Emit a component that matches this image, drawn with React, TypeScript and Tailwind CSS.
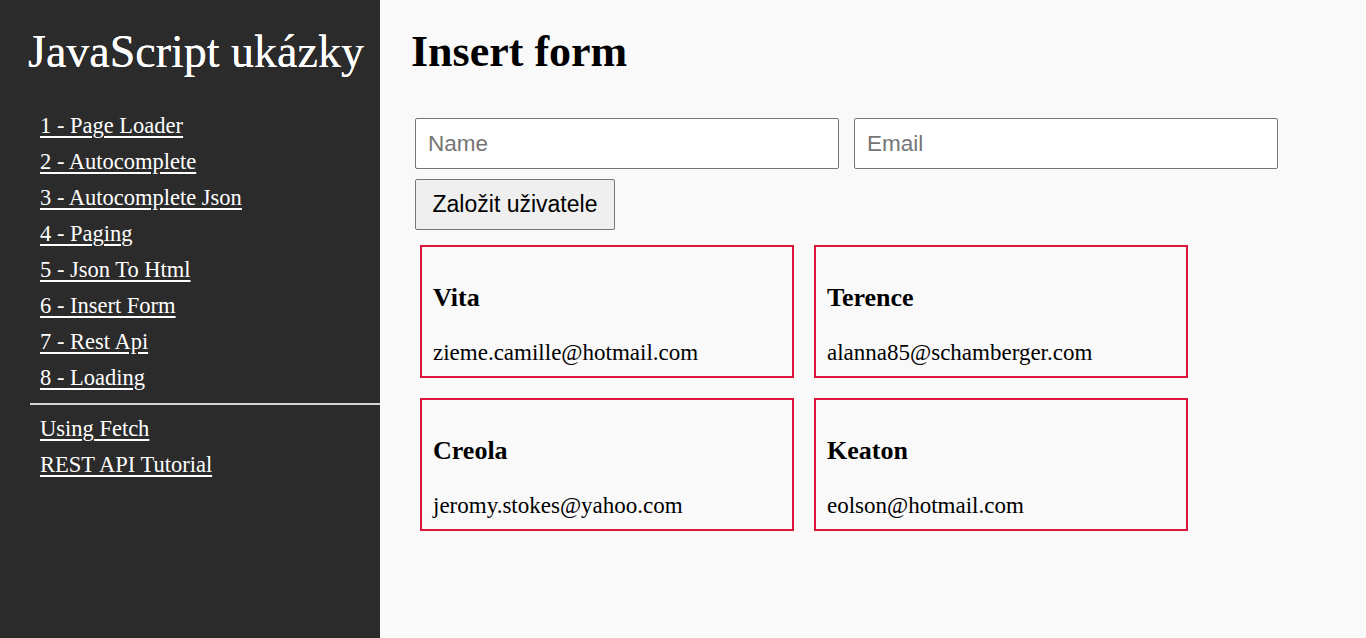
const links = [
  '1 - Page Loader',
  '2 - Autocomplete',
  '3 - Autocomplete Json',
  '4 - Paging',
  '5 - Json To Html',
  '6 - Insert Form',
  '7 - Rest Api',
  '8 - Loading',
]

const extraLinks = ['Using Fetch', 'REST API Tutorial']

const users = [
  { name: 'Vita', email: 'zieme.camille@hotmail.com' },
  { name: 'Terence', email: 'alanna85@schamberger.com' },
  { name: 'Creola', email: 'jeromy.stokes@yahoo.com' },
  { name: 'Keaton', email: 'eolson@hotmail.com' },
]

const serif = "font-['Liberation_Serif',serif]"

export default function App() {
  return (
    <div className={`flex min-h-screen ${serif}`}>
      <aside className="w-[380px] shrink-0 bg-[#2b2b2b] text-white">
        <h1 className="flex h-[108px] items-center pb-1 pl-[28px] text-[46px] leading-none [text-shadow:0_0_0.6px_white]">
          JavaScript ukázky
        </h1>
        <ul className="pl-[40px] text-[22.5px]">
          {links.map((l) => (
            <li key={l} className="flex h-9 items-center">
              <a href="#" className="underline decoration-[1.5px] underline-offset-[3px]">
                {l}
              </a>
            </li>
          ))}
        </ul>
        <hr className="ml-[30px] mt-[7px] border-t-2 border-[#d4d4d4]" />
        <ul className="mt-[6px] pl-[40px] text-[22.5px]">
          {extraLinks.map((l) => (
            <li key={l} className="flex h-9 items-center">
              <a href="#" className="underline decoration-[1.5px] underline-offset-[3px]">
                {l}
              </a>
            </li>
          ))}
        </ul>
      </aside>

      <main className="flex-1 bg-[#f9f9f9] pl-[35px] text-black">
        <h2 className="-ml-1 flex h-[108px] items-center pb-1 text-[44px] font-bold leading-none">
          Insert form
        </h2>
        <div className="mt-[10px] flex gap-[15px] font-['Liberation_Sans',sans-serif]">
          <input
            placeholder="Name"
            className="h-[51px] w-[424px] rounded-[2px] border border-[#767676] bg-white px-3 text-[22.5px] placeholder:text-[#757575]"
          />
          <input
            placeholder="Email"
            className="h-[51px] w-[424px] rounded-[2px] border border-[#767676] bg-white px-3 text-[22.5px] placeholder:text-[#757575]"
          />
        </div>
        <button className="mt-[10px] h-[51px] w-[200px] rounded-[2px] border border-[#767676] bg-[#efefef] font-['Liberation_Sans',sans-serif] text-[23px]">
          Založit uživatele
        </button>
        <div className="ml-[5px] mt-[15px] grid w-[768px] grid-cols-[374px_374px] gap-x-[20px] gap-y-[20px]">
          {users.map((u) => (
            <div
              key={u.name}
              className="h-[133px] border-2 border-[#dc143c] px-[11px]"
            >
              <h3 className="mt-[36px] text-[26px] font-bold leading-[30px]">{u.name}</h3>
              <p className="mt-[26px] text-[23px] leading-[28px]">{u.email}</p>
            </div>
          ))}
        </div>
      </main>
    </div>
  )
}
